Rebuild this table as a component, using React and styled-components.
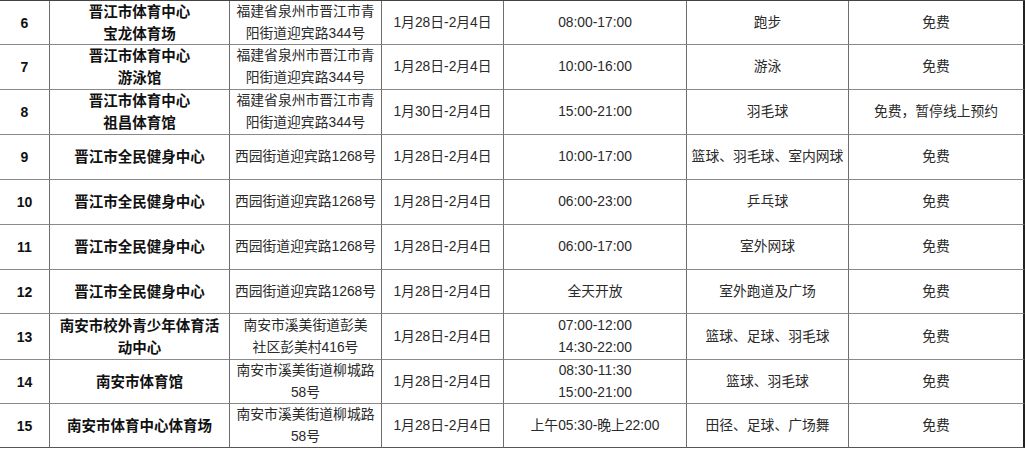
import React from "react";
import styled, { createGlobalStyle } from "styled-components";

const Global = createGlobalStyle`
  html, body { margin: 0; padding: 0; background: #ffffff; }
  body { font-family: "Liberation Sans", "Noto Sans CJK SC", sans-serif; }
`;

const Grid = styled.div`
  display: grid;
  width: 1025px;
  grid-template-columns: 50px 180px 152px 122px 183px 162px 176px;
  grid-template-rows: ${(p) => p.$rows.map((h) => `${h}px`).join(" ")};
  border-top: 1px solid #444;
  box-sizing: border-box;
`;

const Cell = styled.div`
  box-sizing: border-box;
  display: flex;
  flex-direction: column;
  align-items: center;
  justify-content: center;
  text-align: center;
  padding: 0 4px;
  border-bottom: 1px solid ${(p) => (p.$last ? "#555" : "#8a8a8a")};
  border-right: ${(p) => (p.$edge ? "2px solid #222" : "1px solid #6e6e6e")};
  font-family: "Liberation Sans", "Noto Sans CJK SC", sans-serif;
  font-size: ${(p) => (p.$bold ? "14.5px" : "13.8px")};
  font-weight: ${(p) => (p.$bold ? 700 : 400)};
  color: ${(p) => (p.$bold ? "#111" : "#2a2a2a")};
  line-height: 22px;
  white-space: nowrap;
`;

const NumCell = styled(Cell)`
  font-size: 14px;
  font-weight: 700;
  color: #111;
`;

const Line = styled.span`
  display: block;
`;

const rows = [
  { n: "6", name: ["晋江市体育中心", "宝龙体育场"], addr: ["福建省泉州市晋江市青", "阳街道迎宾路344号"], date: "1月28日-2月4日", time: ["08:00-17:00"], act: "跑步", fee: "免费" },
  { n: "7", name: ["晋江市体育中心", "游泳馆"], addr: ["福建省泉州市晋江市青", "阳街道迎宾路344号"], date: "1月28日-2月4日", time: ["10:00-16:00"], act: "游泳", fee: "免费" },
  { n: "8", name: ["晋江市体育中心", "祖昌体育馆"], addr: ["福建省泉州市晋江市青", "阳街道迎宾路344号"], date: "1月30日-2月4日", time: ["15:00-21:00"], act: "羽毛球", fee: "免费，暂停线上预约" },
  { n: "9", name: ["晋江市全民健身中心"], addr: ["西园街道迎宾路1268号"], date: "1月28日-2月4日", time: ["10:00-17:00"], act: "篮球、羽毛球、室内网球", fee: "免费" },
  { n: "10", name: ["晋江市全民健身中心"], addr: ["西园街道迎宾路1268号"], date: "1月28日-2月4日", time: ["06:00-23:00"], act: "乒乓球", fee: "免费" },
  { n: "11", name: ["晋江市全民健身中心"], addr: ["西园街道迎宾路1268号"], date: "1月28日-2月4日", time: ["06:00-17:00"], act: "室外网球", fee: "免费" },
  { n: "12", name: ["晋江市全民健身中心"], addr: ["西园街道迎宾路1268号"], date: "1月28日-2月4日", time: ["全天开放"], act: "室外跑道及广场", fee: "免费" },
  { n: "13", name: ["南安市校外青少年体育活", "动中心"], addr: ["南安市溪美街道彭美", "社区彭美村416号"], date: "1月28日-2月4日", time: ["07:00-12:00", "14:30-22:00"], act: "篮球、足球、羽毛球", fee: "免费" },
  { n: "14", name: ["南安市体育馆"], addr: ["南安市溪美街道柳城路", "58号"], date: "1月28日-2月4日", time: ["08:30-11:30", "15:00-21:00"], act: "篮球、羽毛球", fee: "免费" },
  { n: "15", name: ["南安市体育中心体育场"], addr: ["南安市溪美街道柳城路", "58号"], date: "1月28日-2月4日", time: ["上午05:30-晚上22:00"], act: "田径、足球、广场舞", fee: "免费" },
];

const heights = [44, 45, 45, 45, 45, 45, 44, 46, 44, 44];

const Lines = ({ items }) => items.map((t, i) => <Line key={i}>{t}</Line>);

export default function App() {
  return (
    <>
      <Global />
      <Grid $rows={heights}>
        {rows.map((r, i) => {
          const last = i === rows.length - 1;
          return (
            <React.Fragment key={r.n}>
              <NumCell $last={last}>{r.n}</NumCell>
              <Cell $bold $last={last}><Lines items={r.name} /></Cell>
              <Cell $last={last}><Lines items={r.addr} /></Cell>
              <Cell $last={last}>{r.date}</Cell>
              <Cell $last={last}><Lines items={r.time} /></Cell>
              <Cell $last={last}>{r.act}</Cell>
              <Cell $last={last} $edge>{r.fee}</Cell>
            </React.Fragment>
          );
        })}
      </Grid>
    </>
  );
}
